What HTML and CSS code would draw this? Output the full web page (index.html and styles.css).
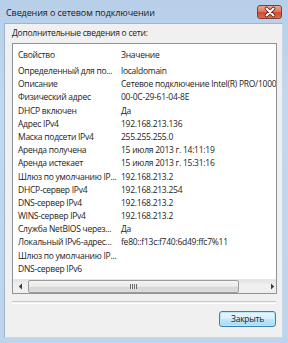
FILE: index.html
```html
<!DOCTYPE html>
<html>
<head>
<meta charset="utf-8">
<link rel="stylesheet" href="styles.css">
</head>
<body>
<div class="window">
  <div class="titlebar">
    <span class="title">Сведения о сетевом подключении</span>
    <div class="close">
      <svg width="24" height="14" viewBox="0 0 24 14">
        <path d="M8.5 3.5 L15.5 10.5 M15.5 3.5 L8.5 10.5" stroke="#5a1a10" stroke-width="3.6" stroke-linecap="round"/>
        <path d="M8.5 3.5 L15.5 10.5 M15.5 3.5 L8.5 10.5" stroke="#ffffff" stroke-width="2" stroke-linecap="round"/>
      </svg>
    </div>
  </div>
  <div class="client">
    <div class="caption">Дополнительные сведения о сети:</div>
    <div class="listbox">
      <div class="header">
        <span class="c1">Свойство</span>
        <span class="c2">Значение</span>
      </div>
      <div class="rows">
        <span class="c1">Определенный для по...</span><span class="c2">localdomain</span>
        <span class="c1">Описание</span><span class="c2">Сетевое подключение Intel(R) PRO/1000 MT</span>
        <span class="c1">Физический адрес</span><span class="c2">00-0C-29-61-04-8E</span>
        <span class="c1">DHCP включен</span><span class="c2">Да</span>
        <span class="c1">Адрес IPv4</span><span class="c2">192.168.213.136</span>
        <span class="c1">Маска подсети IPv4</span><span class="c2">255.255.255.0</span>
        <span class="c1">Аренда получена</span><span class="c2">15 июля 2013 г. 14:11:19</span>
        <span class="c1">Аренда истекает</span><span class="c2">15 июля 2013 г. 15:31:16</span>
        <span class="c1">Шлюз по умолчанию IP...</span><span class="c2">192.168.213.2</span>
        <span class="c1">DHCP-сервер IPv4</span><span class="c2">192.168.213.254</span>
        <span class="c1">DNS-сервер IPv4</span><span class="c2">192.168.213.2</span>
        <span class="c1">WINS-сервер IPv4</span><span class="c2">192.168.213.2</span>
        <span class="c1">Служба NetBIOS через...</span><span class="c2">Да</span>
        <span class="c1">Локальный IPv6-адрес...</span><span class="c2">fe80::f13c:f740:6d49:ffc7%11</span>
        <span class="c1">Шлюз по умолчанию IP...</span><span class="c2"></span>
        <span class="c1">DNS-сервер IPv6</span><span class="c2"></span>
      </div>
      <div class="hscroll">
        <div class="arrow left"><svg width="5" height="7" viewBox="0 0 5 7"><path d="M4 0.5 L0.8 3.5 L4 6.5 Z" fill="#3c3c3c"/></svg></div>
        <div class="track">
          <div class="thumb"><span class="grip"></span></div>
        </div>
        <div class="arrow right"><svg width="5" height="7" viewBox="0 0 5 7"><path d="M1 0.5 L4.2 3.5 L1 6.5 Z" fill="#3c3c3c"/></svg></div>
      </div>
    </div>
    <div class="sep"></div>
    <div class="footer">
      <button class="btn">Закрыть</button>
    </div>
  </div>
</div>
</body>
</html>
```

FILE: styles.css
```css
html, body {
  margin: 0;
  padding: 0;
}
body {
  width: 288px;
  height: 343px;
  overflow: hidden;
  font-family: "Open Sans", "Noto Sans", sans-serif;
  font-size: 8.5px;
  letter-spacing: -0.25px;
  color: #1c1c1c;
}
.window {
  width: 288px;
  height: 343px;
  box-sizing: border-box;
  padding: 0 5px 5px 4px;
  background: linear-gradient(180deg, #b7cfe9 0%, #c2d8ef 30%, #bed4ec 100%);
  display: flex;
  flex-direction: column;
}
.titlebar {
  height: 23px;
  flex: none;
  display: flex;
  align-items: flex-start;
  justify-content: space-between;
}
.title {
  margin: 6px 0 0 2px;
  font-size: 9px;
  letter-spacing: -0.1px;
  line-height: 14px;
  color: #1a1a1a;
}
.close {
  margin: 5px 1px 0 0;
  width: 25px;
  height: 14px;
  box-sizing: border-box;
  border: 1px solid #8a3a2e;
  border-radius: 3px;
  background: linear-gradient(180deg, #eba792 0%, #e07a62 45%, #cf4a30 55%, #dc6f52 100%);
  display: flex;
  align-items: center;
  justify-content: center;
}
.close svg {
  display: block;
  margin: -1px;
}
.client {
  flex: 1;
  background: #f0f0f0;
  border: 1px solid #9fb4cc;
  border-right-color: #c9d8e8;
  border-bottom-color: #c9d8e8;
  box-sizing: border-box;
  padding: 2px 5px 0 7px;
  display: flex;
  flex-direction: column;
}
.caption {
  line-height: 14px;
  height: 14px;
  margin-bottom: 3px;
  font-size: 8.5px;
}
.listbox {
  height: 251px;
  box-sizing: border-box;
  border: 1px solid #8e9399;
  background: #ffffff;
  display: flex;
  flex-direction: column;
}
.header {
  height: 20px;
  flex: none;
  display: grid;
  grid-template-columns: 104px 1fr;
  align-items: center;
  line-height: 13px;
}
.header .c1, .rows .c1 {
  padding-left: 5px;
  white-space: nowrap;
  overflow: hidden;
}
.header .c2, .rows .c2 {
  padding-left: 4px;
  white-space: nowrap;
  overflow: hidden;
}
.rows {
  flex: 1;
  display: grid;
  grid-template-columns: 104px 1fr;
  grid-auto-rows: 13.2px;
  line-height: 13.2px;
  align-content: start;
}
.hscroll {
  height: 13px;
  flex: none;
  display: flex;
  background: linear-gradient(180deg, #e3e3e3 0%, #f1f1f1 40%, #efefef 100%);
  border-top: 1px solid #e6e6e6;
}
.arrow {
  width: 14px;
  flex: none;
  display: flex;
  align-items: center;
  justify-content: center;
}
.track {
  flex: 1;
  display: flex;
  padding: 0 26px 0 1px;
}
.thumb {
  width: 211px;
  box-sizing: border-box;
  border: 1px solid #9b9b9b;
  border-radius: 2px;
  background: linear-gradient(180deg, #f5f5f5 0%, #e9e9e9 50%, #d6d6d6 51%, #dcdcdc 100%);
  display: flex;
  align-items: center;
  justify-content: center;
}
.grip {
  width: 7px;
  height: 5px;
  background: repeating-linear-gradient(90deg, #6a6a6a 0 1px, #eeeeee 1px 2px);
}
.sep {
  margin-top: 7px;
  height: 1px;
  border-top: 1px solid #c9c9c9;
  border-bottom: 1px solid #ffffff;
  margin-right: 1px;
}
.footer {
  display: flex;
  justify-content: flex-end;
  padding-top: 7px;
}
.btn {
  width: 57px;
  height: 16px;
  margin-right: 1px;
  padding: 0;
  font-family: inherit;
  font-size: 8.5px;
  letter-spacing: -0.25px;
  line-height: 14px;
  color: #1c1c1c;
  border: 1px solid #3c7fb1;
  border-radius: 3px;
  background: linear-gradient(180deg, #eaf6fd 0%, #d9f0fc 45%, #bee6fd 55%, #a7d9f5 100%);
  box-shadow: inset 0 0 0 1px #bde6fa;
}
```
